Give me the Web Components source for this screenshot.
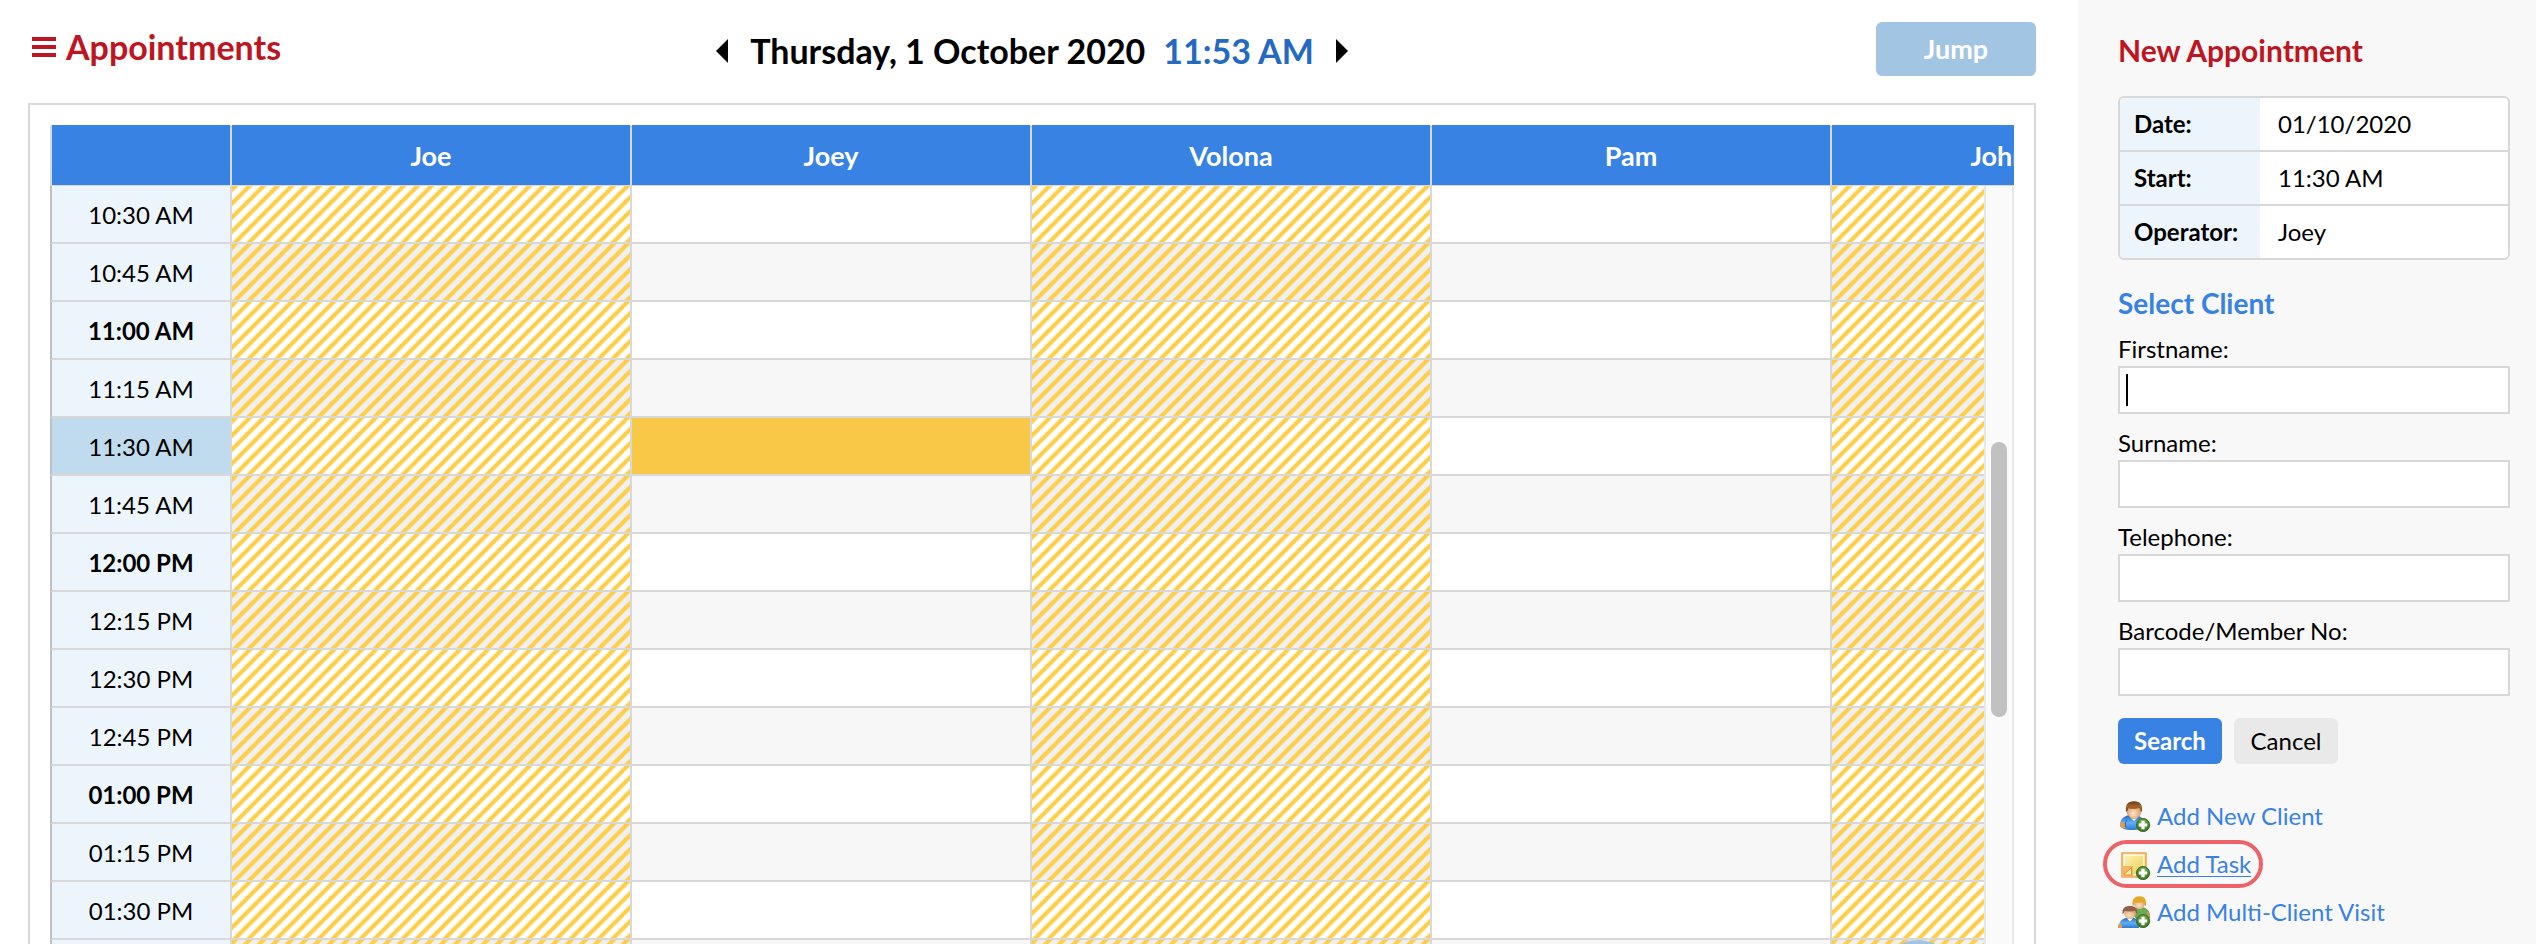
<!DOCTYPE html>
<html lang="en">
<head>
<meta charset="utf-8">
<meta name="viewport" content="width=device-width, initial-scale=1">
<title>Appointments</title>
<style>
  html, body {
    height: 100%;
    margin: 0;
    overflow: hidden;
  }
  body {
    background: #fff;
    color: #000;
    font-family: Lato, "Liberation Sans", sans-serif;
    font-size: 24px;
    line-height: 30px;
    --blue: #3882e4;
    --red: #bd1521;
    --line: #d8d8d8;
    --pale: #edf5fc;
  }
</style>
</head>
<body>
<appointments-app></appointments-app>

<script>
// Custom Element: Date bar above the calendar
class DateBar extends HTMLElement {
  constructor() {
    super();
    this.attachShadow({ mode: 'open' });
    this.shadowRoot.innerHTML = `
      <style>
        :host {
          display: grid;
          grid-template-columns: 1fr auto 1fr;
          align-items: center;
          height: 54px;
        }
        h1 {
          display: flex;
          align-items: center;
          gap: 10px;
          margin: 0;
          padding: 0 0 4px 4px;
          color: var(--red);
          font-size: 34px;
          line-height: 40px;
        }
        .menu {
          display: block;
          width: 24px;
          height: 20px;
        }
        .date {
          display: flex;
          align-items: center;
          gap: 22px;
          font-size: 34px;
          font-weight: 700;
          line-height: 40px;
          padding-top: 4px;
        }
        .date p {
          display: flex;
          gap: 18px;
          margin: 0;
        }
        .time {
          color: #246ac2;
        }
        .arrow {
          display: block;
          padding: 0;
          border: 0;
          background: none;
          cursor: pointer;
        }
        .arrow svg {
          display: block;
        }
        .jump {
          justify-self: end;
          width: 160px;
          height: 54px;
          padding: 0;
          border: 0;
          border-radius: 6px;
          background: #a2c5e3;
          color: #fff;
          font: 700 27px/34px Lato, sans-serif;
        }
      </style>
      <h1>
        <svg class="menu" viewBox="0 0 24 20" aria-hidden="true">
          <path d="M0 0h24v4H0zM0 8h24v4H0zM0 16h24v4H0z" fill="#bd1521"/>
        </svg>
        <slot></slot>
      </h1>
      <div class="date">
        <button class="arrow" aria-label="Previous day">
          <svg width="12" height="24" viewBox="0 0 12 24"><path d="M12 0v24L0 12z"/></svg>
        </button>
        <p><span>${this.getAttribute('date')}</span><span class="time">${this.getAttribute('time')}</span></p>
        <button class="arrow" aria-label="Next day">
          <svg width="12" height="24" viewBox="0 0 12 24"><path d="M0 0v24l12-12z"/></svg>
        </button>
      </div>
      <button class="jump">Jump</button>
    `;
  }
}
customElements.define('date-bar', DateBar);

// Custom Element: Calendar table, one column per operator
const operators = [
  { name: 'Joe', away: true },
  { name: 'Joey', away: false },
  { name: 'Volona', away: true },
  { name: 'Pam', away: false },
  { name: 'John', away: true },
];

const slots = [
  '10:30 AM', '10:45 AM', '11:00 AM', '11:15 AM', '11:30 AM', '11:45 AM', '12:00 PM',
  '12:15 PM', '12:30 PM', '12:45 PM', '01:00 PM', '01:15 PM', '01:30 PM', '01:45 PM',
];

class CalendarGrid extends HTMLElement {
  constructor() {
    super();
    this.attachShadow({ mode: 'open' });
  }

  connectedCallback() {
    this.render();
  }

  cell(operator, time) {
    if (operator.away) return '<td class="away"></td>';
    const picked = operator.name === this.getAttribute('operator') && time === this.getAttribute('start');
    return picked ? '<td class="picked"></td>' : '<td></td>';
  }

  row(time) {
    const classes = [];
    if (time.includes(':00')) classes.push('hour');
    if (time === this.getAttribute('start')) classes.push('current');
    return `<tr class="${classes.join(' ')}"><th scope="row">${time}</th>${operators.map((o) => this.cell(o, time)).join('')}</tr>`;
  }

  render() {
    const cols = '<colgroup><col class="times"><col><col><col><col><col class="last"></colgroup>';
    this.shadowRoot.innerHTML = `
      <style>
        :host {
          display: block;
          border: 2px solid var(--line);
          padding: 20px;
        }
        .head {
          overflow: hidden;
          border-bottom: 1px solid var(--line);
        }
        .body {
          display: flex;
        }
        .rows {
          flex: 1;
          min-width: 0;
          overflow: hidden;
        }
        table {
          table-layout: fixed;
          width: 2116px;
          border-collapse: separate;
          border-spacing: 0;
        }
        col {
          width: 400px;
        }
        .times {
          width: 180px;
        }
        .last {
          width: 336px;
        }
        th, td {
          box-sizing: border-box;
          padding: 2px 0 0;
          border-left: 2px solid var(--line);
          text-align: center;
        }
        thead td, thead th {
          height: 60px;
          background: var(--blue);
          background-clip: padding-box;
          color: #fff;
          font-size: 27px;
          font-weight: 700;
        }
        tbody th, tbody td {
          height: 58px;
          border-bottom: 2px solid var(--line);
        }
        tbody th {
          border-left-color: #c0c0c0;
          background: var(--pale);
          font-weight: 400;
        }
        tr:nth-child(even) td {
          background-color: #f7f7f7;
        }
        .hour th {
          font-weight: 700;
        }
        .current th {
          background: #c0dbee;
        }
        td.away {
          background-image: linear-gradient(135deg, #ffce47 19%, transparent 27%, transparent 48%, #ffce47 56%, #ffce47 69%, transparent 77%, transparent 98%, #ffce47);
          background-size: 14px 14px;
        }
        tr:nth-child(even) td.away {
          background-color: #f0f0f0;
        }
        td.picked {
          background: #f9c846;
        }
        .track {
          box-sizing: border-box;
          width: 30px;
          padding-top: 256px;
          border: solid #e8e8e8;
          border-width: 0 2px;
          background: #fafafa;
        }
        .thumb {
          width: 16px;
          height: 275px;
          margin: 0 auto;
          border-radius: 8px;
          background: #c1c1c1;
        }
      </style>
      <div class="head">
        <table>
          ${cols}
          <thead><tr><td></td>${operators.map((o) => `<th scope="col">${o.name}</th>`).join('')}</tr></thead>
        </table>
      </div>
      <div class="body">
        <div class="rows">
          <table>
            ${cols}
            <tbody>${slots.map((time) => this.row(time)).join('')}</tbody>
          </table>
        </div>
        <div class="track"><div class="thumb"></div></div>
      </div>
    `;
  }
}
customElements.define('calendar-grid', CalendarGrid);

// Custom Element: Summary of the appointment being made
class AppointmentSummary extends HTMLElement {
  constructor() {
    super();
    this.attachShadow({ mode: 'open' });
    this.shadowRoot.innerHTML = `
      <style>
        :host {
          display: block;
          overflow: hidden;
          border: 2px solid var(--line);
          border-radius: 6px;
          background: #fff;
        }
        table {
          width: 100%;
          border-collapse: separate;
          border-spacing: 0;
        }
        th, td {
          box-sizing: border-box;
          height: 54px;
          padding: 0 0 0 18px;
          border-bottom: 2px solid var(--line);
          text-align: left;
        }
        th {
          width: 140px;
          padding-left: 14px;
          background: var(--pale);
        }
        tr:last-child > * {
          height: 52px;
          border-bottom: 0;
        }
      </style>
      <table>
        <tr><th scope="row">Date:</th><td>${this.getAttribute('date')}</td></tr>
        <tr><th scope="row">Start:</th><td>${this.getAttribute('start')}</td></tr>
        <tr><th scope="row">Operator:</th><td>${this.getAttribute('operator')}</td></tr>
      </table>
    `;
  }
}
customElements.define('appointment-summary', AppointmentSummary);

// Custom Element: Labelled text box
class TextField extends HTMLElement {
  constructor() {
    super();
    this.attachShadow({ mode: 'open' });
    this.shadowRoot.innerHTML = `
      <style>
        :host {
          display: flex;
          flex-direction: column;
          gap: 2px;
        }
        input {
          box-sizing: border-box;
          width: 100%;
          height: 48px;
          padding: 0 6px;
          border: 2px solid var(--line);
          border-radius: 0;
          background: #fff;
          font: inherit;
        }
        :host([active]) input {
          background: linear-gradient(#000, #000) 6px 6px / 2px 32px no-repeat #fff;
        }
      </style>
      <label for="box"><slot></slot></label>
      <input id="box" type="text">
    `;
  }
}
customElements.define('text-field', TextField);

// Custom Element: Link with a small picture in front
const plusBadge = `
  <circle cx="25" cy="25" r="7" fill="url(#green)"/>
  <circle cx="25" cy="25" r="6.3" fill="none" stroke="#3c6d22" stroke-width="1"/>
  <path d="M23.4 20.800h3.200v2.600h2.600v3.200h-2.600v2.600h-3.200v-2.600h-2.600v-3.200h2.600z" fill="#fff"/>
`;

const icons = {
  client: `
    <path d="M2 25c0-5 3-8 7-9.500h11c4 1.500 6 4.500 6 9.500-1 4-5 5-12 5-6 0-11-1-12-5z" fill="url(#shirt)"/>
    <path d="M2 23c2-2 5-1 5 2v3.500c-3 .3-5-1-5-3.500z" fill="#e39a55"/>
    <path d="M7.500 27c0-3-.3-5 1.500-7" fill="none" stroke="#2462b0"/>
    <path d="M12 17l4 4 4-4z" fill="#fff"/>
    <ellipse cx="16" cy="11.500" rx="6.800" ry="7" fill="url(#skin)" stroke="#c98a55" stroke-width=".7"/>
    <path d="M8.200 12C7 5 9.500 1.300 16 1.300S25 5 23.800 12c-1.300-1-1.500-2.500-2-4-3 .8-8 1-11.500.2-.4 1.600-.8 2.800-2.100 3.800z" fill="url(#brown)"/>
    ${plusBadge}`,
  task: `
    <path d="M4 5h24v24H4z" fill="url(#paper)" stroke="#eda653" stroke-width="1.600"/>
    <path d="M6.300 7.300h19.400v19.400H6.300z" fill="none" stroke="#fff6dc" stroke-width="1.400"/>
    <path d="M4.500 18H15v10.500H4.500z" fill="#f3b863"/>
    <path d="M6 26.500l7.500-7V27H6z" fill="#fbe6a4" stroke="#dd9240"/>
    ${plusBadge}`,
  group: `
    <path d="M17 20c-2-6 1-8 5-8.500 6 0 9 2.500 9.500 8V22H18z" fill="#69ad50" stroke="#44883a" stroke-width=".7"/>
    <path d="M29 15c2 .5 3 3 3 5.500l-2 .5z" fill="#d99459"/>
    <ellipse cx="21.500" cy="7.500" rx="5.500" ry="5.500" fill="url(#skin)"/>
    <path d="M14.500 10C14 3 16.500.3 21.500.3S28.500 3 28 10c-1.500-.5-1.700-2-2-4-3 1-6 1-9.300.2-.2 2-.7 3.300-2.200 3.800z" fill="#e5a727"/>
    <path d="M1.500 32C0 27 3 23 8 22h8c4 1 5 4 5 10z" fill="url(#shirt)"/>
    <path d="M0 29c1.500-2 4-1.500 4 1v2H0z" fill="#e39a55"/>
    <path d="M9 22.500l3 3 3-3z" fill="#fff"/>
    <ellipse cx="12" cy="17.500" rx="5.800" ry="5.500" fill="url(#skin)"/>
    <path d="M4.600 18c-.7-5.500 2-8 7.400-8s8 2.500 7.200 8c-1.200-.5-1.500-1.700-1.800-3-3 .6-7.300.6-10.700 0-.3 1.300-.9 2.500-2.100 3z" fill="#95604a"/>
    ${plusBadge}`,
};

class ActionLink extends HTMLElement {
  constructor() {
    super();
    this.attachShadow({ mode: 'open' });
    this.shadowRoot.innerHTML = `
      <style>
        :host {
          display: flex;
          align-items: center;
          gap: 7px;
          position: relative;
          height: 48px;
        }
        svg {
          width: 32px;
          height: 32px;
        }
        a {
          color: var(--blue);
          text-decoration: none;
        }
        :host([marked]) a {
          text-decoration: underline;
          text-decoration-thickness: 1px;
          text-underline-offset: 3px;
        }
        /* ring round the link that is being pointed out */
        :host([marked])::after {
          content: "";
          box-sizing: border-box;
          position: absolute;
          top: 0;
          left: -15px;
          width: 160px;
          height: 48px;
          border: 4px solid #ee6166;
          border-radius: 24px;
          pointer-events: none;
        }
      </style>
      <svg viewBox="0 0 32 32" aria-hidden="true">
        <defs>
          <radialGradient id="green" cx=".5" cy=".35"><stop offset="0" stop-color="#8fc25f"/><stop offset="1" stop-color="#437a2a"/></radialGradient>
          <linearGradient id="shirt" x2="0" y2="1"><stop offset="0" stop-color="#2f69b5"/><stop offset=".5" stop-color="#5fb0f8"/><stop offset="1" stop-color="#2f78d0"/></linearGradient>
          <radialGradient id="skin" cx=".45" cy=".65"><stop offset="0" stop-color="#fde3c6"/><stop offset="1" stop-color="#e0a878"/></radialGradient>
          <linearGradient id="brown" x2="0" y2="1"><stop offset="0" stop-color="#6b3a14"/><stop offset=".5" stop-color="#a5642c"/><stop offset="1" stop-color="#6b3a14"/></linearGradient>
          <linearGradient id="paper" x2="1" y2="1"><stop offset="0" stop-color="#fdf5c5"/><stop offset="1" stop-color="#eecb3e"/></linearGradient>
        </defs>
        ${icons[this.getAttribute('icon')]}
      </svg>
      <a href="#"><slot></slot></a>
    `;
  }
}
customElements.define('action-link', ActionLink);

// Custom Element: Sidebar with the search form
class ClientPanel extends HTMLElement {
  constructor() {
    super();
    this.attachShadow({ mode: 'open' });
    this.shadowRoot.innerHTML = `
      <style>
        :host {
          display: block;
          box-sizing: border-box;
          padding: 30px 26px 0 40px;
          background: #f8f8f8;
        }
        h2 {
          margin: 0 0 26px;
          color: var(--red);
          font-size: 30px;
          line-height: 40px;
        }
        h3 {
          margin: 26px 0 14px;
          color: var(--blue);
          font-size: 28px;
          line-height: 34px;
        }
        form {
          display: flex;
          flex-direction: column;
          gap: 14px;
        }
        .buttons {
          display: flex;
          gap: 12px;
          padding-top: 8px;
        }
        button {
          width: 104px;
          height: 46px;
          padding: 0;
          border: 0;
          border-radius: 6px;
          background: #e9e9e9;
          color: #000;
          font: inherit;
        }
        .search {
          background: var(--blue);
          color: #fff;
          font-weight: 700;
        }
        nav {
          margin-top: 28px;
        }
      </style>
      <h2>New Appointment</h2>
      <appointment-summary date="01/10/2020" start="11:30 AM" operator="Joey"></appointment-summary>
      <h3>Select Client</h3>
      <form>
        <text-field active>Firstname:</text-field>
        <text-field>Surname:</text-field>
        <text-field>Telephone:</text-field>
        <text-field>Barcode/Member No:</text-field>
        <div class="buttons">
          <button class="search" type="button">Search</button>
          <button type="button">Cancel</button>
        </div>
      </form>
      <nav>
        <action-link icon="client">Add New Client</action-link>
        <action-link icon="task" marked>Add Task</action-link>
        <action-link icon="group">Add Multi-Client Visit</action-link>
      </nav>
    `;
  }
}
customElements.define('client-panel', ClientPanel);

// Custom Element: Whole page
class AppointmentsApp extends HTMLElement {
  constructor() {
    super();
    this.attachShadow({ mode: 'open' });
    this.shadowRoot.innerHTML = `
      <style>
        :host {
          display: flex;
          height: 100vh;
          overflow: hidden;
        }
        main {
          flex: 1;
          min-width: 0;
          position: relative;
          overflow: hidden;
          box-sizing: border-box;
          padding: 22px 42px 0 28px;
        }
        calendar-grid {
          margin-top: 27px;
        }
        client-panel {
          flex: 0 0 458px;
        }
        /* round button that peeks in from the bottom edge */
        .more {
          position: absolute;
          right: 120px;
          bottom: -76px;
          width: 80px;
          height: 80px;
          border: 0;
          border-radius: 50%;
          background: #a2c5e3;
        }
      </style>
      <main>
        <date-bar date="Thursday, 1 October 2020" time="11:53 AM">Appointments</date-bar>
        <calendar-grid operator="Joey" start="11:30 AM"></calendar-grid>
        <button class="more" aria-label="More"></button>
      </main>
      <client-panel></client-panel>
    `;
  }
}
customElements.define('appointments-app', AppointmentsApp);
</script>
</body>
</html>
